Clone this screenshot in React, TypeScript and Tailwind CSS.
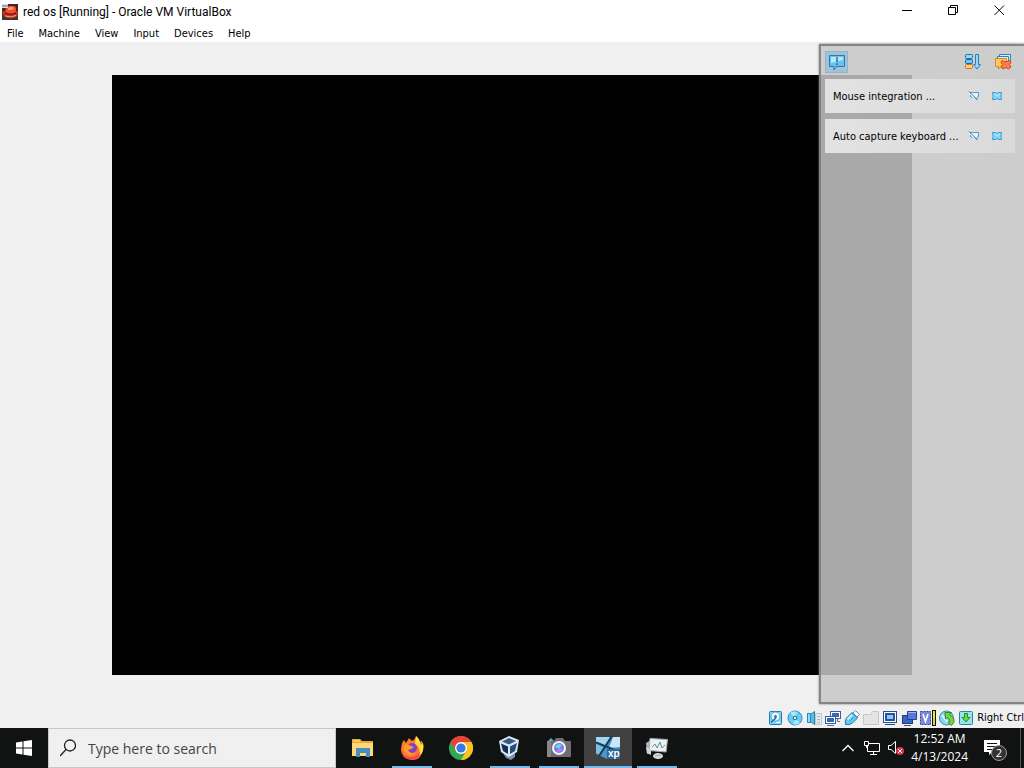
import { FC, ReactNode, useState } from "react";

const Svg: FC<{ size?: string; box?: string; children: ReactNode }> = ({
  size = "h-4 w-4",
  box = "0 0 16 16",
  children,
}) => (
  <svg viewBox={box} className={`${size} shrink-0`} fill="none" aria-hidden="true">
    {children}
  </svg>
);

const VmIcon = () => (
  <Svg>
    <rect width="16" height="16" fill="#4a2320" />
    <path d="M0 11H16V16H0Z" fill="#3d3632" />
    <path d="M0 8Q0 12 6 14Q14 15 16 11V8L13 6L2 7Z" fill="#c2301c" />
    <path d="M3 9L4 4Q7 1 11 2Q14 2 14 5V9Q9 12 3 9Z" fill="#ee5030" />
    <path d="M6 4Q9 2 12 4L10 6H6Z" fill="#ff9a72" />
    <path d="M3 8Q9 11 14 8V9.5Q9 12 3 9.5Z" fill="#6f140c" />
    <path d="M3 12Q9 14 14 11.5" stroke="#ff9c78" />
    <rect width="6" height="4" fill="#d9dee0" />
    <path d="M1 1V3M3 1V3M5 1V3" stroke="#6c7779" />
  </Svg>
);

const MENUS = ["File", "Machine", "View", "Input", "Devices", "Help"];

const TitleBar = () => (
  <header className="flex h-6 shrink-0 items-center bg-white px-0.5">
    <VmIcon />
    <h1 className="ml-[5px] grow font-[Roboto,sans-serif] text-[12px]">
      red os [Running] - Oracle VM VirtualBox
    </h1>
    <button aria-label="Minimize" className="flex h-6 w-[45px] items-start justify-center pt-[5px]">
      <Svg size="h-[11px] w-[11px]" box="0 0 11 11">
        <path d="M0 5.5H10" stroke="#000" />
      </Svg>
    </button>
    <button aria-label="Restore" className="flex h-6 w-[46px] items-start justify-center pt-[5px]">
      <Svg size="h-[11px] w-[11px]" box="0 0 11 11">
        <path d="M.5 2.5H7.5V9.5H.5ZM2.5 2.5V.5H9.5V7.5H7.5" stroke="#000" />
      </Svg>
    </button>
    <button aria-label="Close" className="flex h-6 w-[46px] items-start justify-center pt-[5px]">
      <Svg size="h-[11px] w-[11px]" box="0 0 11 11">
        <path d="M.5 .5L10 10M10 .5L.5 10" stroke="#000" />
      </Svg>
    </button>
  </header>
);

const MenuBar = () => (
  <nav className="flex h-[18px] shrink-0 items-center gap-[15px] bg-white px-[7px] pt-0.5">
    {MENUS.map((menu) => (
      <button key={menu}>{menu}</button>
    ))}
  </nav>
);

const PinIcon = () => (
  <Svg size="h-3 w-3" box="0 0 12 12">
    <path d="M2.5 2.5H10.5V6.5L9 7.5V10L6.5 7.5L2.5 7Z" fill="#e2f2fa" stroke="#5a9cc2" />
    <path d="M1 1.5L8.5 9" stroke="#3d7fa8" />
    <path d="M1 3L6.5 8.5" stroke="#fff" />
  </Svg>
);

const CrossIcon = () => (
  <Svg size="h-3 w-3" box="0 0 12 12">
    <path
      d="M1.5 2.5H4L6 3.5L8 2.5H10.5V4.5L9.5 6L10.5 7.5V9.5H8L6 8.5L4 9.5H1.5V7.5L2.5 6L1.5 4.5Z"
      fill="#84d3fa"
      stroke="#3d98cc"
    />
    <path d="M3 4L6 5.5L9 4" stroke="#c3ecff" />
  </Svg>
);

const NotificationCenter = () => {
  const [messages, setMessages] = useState([
    "Mouse integration ...",
    "Auto capture keyboard ...",
  ]);

  return (
    <aside className="absolute top-0.5 right-0 bottom-1 w-[205px] border-2 border-r-0 border-[#7d7d7d]/90 bg-[#c7c7c7]/85 shadow-[0_0_2px_#777]">
      <div className="flex h-[33px] items-center pr-3 pb-px pl-1">
        <button
          aria-label="Notifications"
          className="flex h-[22px] w-[23px] items-center justify-center border border-[#8fb5d0] bg-[#a4c2d6]"
        >
          <Svg size="h-[18px] w-[18px]" box="0 0 18 18">
            <path d="M1.5 2.5H16.5V13.5H8.5L6 17V13.5H1.5Z" fill="#62c4f5" stroke="#2d79a5" />
            <path d="M3 4H15V7L3 10Z" fill="#b5e8ff" />
            <path d="M9 4V9M9 10.5V12" stroke="#082b42" />
          </Svg>
        </button>
        <button aria-label="Sort notifications" className="ml-auto">
          <Svg>
            <rect x=".5" y=".5" width="7" height="4" rx="1" fill="#8bdcfb" stroke="#2571a0" />
            <rect x=".5" y="5.5" width="7" height="4" rx="1" fill="#68c9f4" stroke="#235f8c" />
            <rect x=".5" y="10.5" width="7" height="4" rx="1" fill="#ffd07c" stroke="#cc7125" />
            <path d="M10.5 .5H13.5V10.5H15.5L12 15L8.5 10.5H10.5Z" fill="#8edcfc" stroke="#2b7fb5" />
          </Svg>
        </button>
        <button aria-label="Remove all notifications" className="ml-[13px]">
          <Svg size="h-[18px] w-[18px]" box="0 0 18 18">
            <path d="M5.5 5V1.5H16.5V10" fill="#d7edf8" stroke="#347fb5" />
            <path d="M3.5 7V3.5H14.5V12" fill="#d7edf8" stroke="#347fb5" />
            <path d="M1.5 5.5H12.5V13.5H7L4.5 16V13.5H1.5Z" fill="#ffca5c" stroke="#d9832b" />
            <path
              d="M8 7.5L12 9L15.5 7.5L17 9.5L15.5 11.5L17 14L14.5 16L12 14.5L9 16L7 14L8.5 11.5L7 9.5Z"
              fill="#fc7d4b"
              stroke="#d44820"
            />
          </Svg>
        </button>
      </div>
      <ul className="flex flex-col gap-1.5 pr-[9px] pl-1">
        {messages.map((message) => (
          <li
            key={message}
            className="flex h-[34px] items-center bg-linear-to-r from-[#e2e2e2] to-[#dadada] pr-3 pl-2"
          >
            <span className="grow pt-0.5">{message}</span>
            <button aria-label="Do not show again">
              <PinIcon />
            </button>
            <button
              aria-label="Close message"
              className="ml-[11px]"
              onClick={() => setMessages(messages.filter((m) => m !== message))}
            >
              <CrossIcon />
            </button>
          </li>
        ))}
      </ul>
    </aside>
  );
};

const STATUS_ICONS: { name: string; icon: ReactNode }[] = [
  {
    name: "Hard disks",
    icon: (
      <>
        <rect x="1.5" y="1.5" width="12" height="13" rx="1" fill="#7ed6fa" stroke="#1b7dbb" />
        <circle cx="7.5" cy="6.5" r="4.5" fill="#eefaff" stroke="#5aa5cc" />
        <circle cx="7.5" cy="6.5" r="1.5" fill="#3a6fa0" />
        <path d="M3 12.5L8 8" stroke="#2a689c" strokeWidth="1.5" />
        <path d="M8 12.5H12" stroke="#fff" />
      </>
    ),
  },
  {
    name: "Optical drives",
    icon: (
      <>
        <circle cx="8" cy="8" r="7" fill="#65cdf6" stroke="#288bb8" />
        <path d="M8 8L3 3Q7 0 10 2ZM8 8L13 13Q9 16 6 14Z" fill="#a8e7fc" />
        <circle cx="8" cy="8" r="1.8" fill="#fff" stroke="#185c8a" />
      </>
    ),
  },
  {
    name: "Audio",
    icon: (
      <>
        <path d="M9.5 3.5H15.5V14.5H9.5Z" fill="#e6e9eb" stroke="#c4c9cc" />
        <path d="M11 6.5H14M11 9.5H14M11 12.5H14" stroke="#b7bdc1" />
        <path d="M1.5 3.5H4.5V12.5H1.5Z" fill="#8edffc" stroke="#2484b0" />
        <path d="M4.5 4.5L8.5 1.5V14.5L4.5 11.5Z" fill="#5ebfe8" stroke="#2484b0" />
      </>
    ),
  },
  {
    name: "Network",
    icon: (
      <>
        <rect x="5.5" y="1.5" width="10" height="7" fill="#fff" stroke="#3a5c9a" />
        <rect x="7" y="3" width="7" height="4" fill="#3b68b5" />
        <path d="M12.5 9V11.5H15" stroke="#686e75" />
        <rect x=".5" y="6.5" width="10" height="7" fill="#fff" stroke="#3a5c9a" />
        <rect x="2" y="8" width="7" height="4" fill="#3769b3" />
        <path d="M2 15.5H9" stroke="#686e75" />
      </>
    ),
  },
  {
    name: "USB devices",
    icon: (
      <>
        <path d="M9 3L11.5 .5L15.5 4.5L13 7Z" fill="#fff" stroke="#6d8ba0" />
        <path d="M2.5 8L8 2.5L13.5 8L8.5 13Q5 15.5 1.5 14.5Q.5 11 2.5 8Z" fill="#65c8f4" stroke="#217ba9" />
        <path d="M3.5 9.5L8 5" stroke="#c7f1ff" strokeWidth="2" />
        <path d="M6 11L9.5 7.5" stroke="#3a93c0" />
      </>
    ),
  },
  {
    name: "Shared folders",
    icon: <path d="M.5 4.5H8L9.5 1.5H15.5V14.5H.5Z" fill="#e4e4e4" stroke="#c6c6c6" />,
  },
  {
    name: "Display",
    icon: (
      <>
        <rect x="1.5" y="1.5" width="13" height="11" fill="#fff" stroke="#264e8c" />
        <rect x="4" y="4" width="8" height="6" fill="#8ec5f2" stroke="#2454a0" strokeWidth="2" />
        <path d="M3 14.5H13" stroke="#264e8c" />
      </>
    ),
  },
  {
    name: "Recording",
    icon: (
      <>
        <rect x="1.5" y="5.5" width="10" height="8" fill="#3866c3" stroke="#1c3e83" />
        <path d="M6.5 1.5H15.5V9.5H6.5Z" fill="#5878d2" stroke="#273ca0" />
        <path d="M7 2.5H15" stroke="#9fb4f0" />
        <path d="M3 15.5H10" stroke="#505a66" />
      </>
    ),
  },
  {
    name: "Processor",
    icon: (
      <>
        <rect x=".5" y="1.5" width="10" height="13" fill="#7c88dc" stroke="#3542a0" strokeDasharray="2 1" />
        <path d="M3 4L5.5 11.5L8 4" stroke="#fff" strokeWidth="1.6" />
        <rect x="12" y="0" width="4" height="16" fill="#111" />
        <path d="M14 1V15" stroke="#f3ea22" strokeWidth="2" />
        <path d="M14 8V15" stroke="#cde03a" strokeWidth="2" />
      </>
    ),
  },
  {
    name: "Mouse integration",
    icon: (
      <>
        <circle cx="7.5" cy="8" r="7" fill="#8ad4ee" stroke="#318eaf" />
        <path d="M3 5L8 12" stroke="#d9f5ff" strokeWidth="2" />
        <path d="M6 2.5H12.5L10.5 5Q15.5 7 15 12L12.5 15.5L9 12.5L11 11.5Q11 8.5 8 7.5L6.5 9Z" fill="#72d83c" stroke="#318a22" />
      </>
    ),
  },
  {
    name: "Keyboard capture",
    icon: (
      <>
        <rect x="1.5" y="1.5" width="13" height="13" rx="1" fill="#9ae2ee" stroke="#2586a5" />
        <path d="M6.5 3.5H9.5V7.5H12L8 12L4 7.5H6.5Z" fill="#6bdc46" stroke="#288d27" />
      </>
    ),
  },
];

const StatusBar = () => (
  <footer className="flex h-5 shrink-0 items-center justify-end gap-[3px]">
    {STATUS_ICONS.map(({ name, icon }) => (
      <button key={name} aria-label={name}>
        <Svg>{icon}</Svg>
      </button>
    ))}
    <span className="pt-px">Right Ctrl</span>
  </footer>
);

const APPS: { name: string; running?: boolean; active?: boolean; icon: ReactNode }[] = [
  {
    name: "File Explorer",
    icon: (
      <>
        <path d="M1 3H9L11 5H22V20H1Z" fill="#e5a93e" />
        <path d="M1 7H22V20H1Z" fill="#ffd777" />
        <path d="M2 5H9" stroke="#fff0a8" />
        <path d="M5 12H19V21H15V17H9V21H5Z" fill="#438fc2" />
      </>
    ),
  },
  {
    name: "Firefox",
    running: true,
    icon: (
      <>
        <path
          d="M2 7L4 4L6 7L9 2L12 5Q15 4 16 0Q19 3 19 6L22 5Q24 10 23 14Q21 24 12 24Q1 23 1 13Z"
          fill="#ff7b28"
        />
        <path d="M16 0Q21 4 20 9L23 7Q25 17 18 20Q22 12 15 8Z" fill="#ffdd3e" />
        <path d="M1 12Q3 22 12 21Q19 20 20 14Q21 23 12 24Q2 23 1 12Z" fill="#ff4055" />
        <circle cx="12" cy="12" r="5" fill="#8043c6" />
        <path d="M4 9Q7 7 11 10L14 11Q11 14 8 14Q10 18 15 17Q10 21 6 17Q3 14 4 9Z" fill="#ff9a2c" />
      </>
    ),
  },
  {
    name: "Google Chrome",
    icon: (
      <>
        <circle cx="12" cy="12" r="12" fill="#33a852" />
        <path d="M1.6 6A12 12 0 0 1 22.4 6L12 6L6.8 15Z" fill="#e94235" />
        <path d="M22.4 6A12 12 0 0 1 12 24L17.2 15L12 6Z" fill="#fcc31e" />
        <circle cx="12" cy="12" r="6" fill="#fff" />
        <circle cx="12" cy="12" r="4.6" fill="#347be8" />
      </>
    ),
  },
  {
    name: "VirtualBox",
    running: true,
    icon: (
      <>
        <path d="M5 17L8 22L13 24L17 21V15Z" fill="#7594b2" />
        <path d="M1 5L11 0L21 4L19 16L11 21L3 16Z" fill="#dce9f5" />
        <path d="M4 5.5L11 2L18 5L11 8.5Z" fill="#375c83" />
        <path d="M3 7.5L10 10.5V18L5 15Z" fill="#142d4d" />
        <path d="M19 7L12 10.5V18L17 15Z" fill="#294d78" />
      </>
    ),
  },
  {
    name: "Camera",
    running: true,
    icon: (
      <>
        <path d="M1 5L4 2L7 5Z" fill="#43b3c4" />
        <path d="M0 5H7L9 2H16L18 5H24V21H0Z" fill="#6f6b71" />
        <path d="M0 5H4V21H0Z" fill="#89868b" />
        <circle cx="12" cy="12" r="7" fill="#f3f4fb" />
        <circle cx="12" cy="12" r="5" fill="#6b7fe0" />
        <path d="M8 11Q11 6 15 9L12 13Z" fill="#70d1f2" />
        <path d="M9 15Q13 18 16 13L12 12Z" fill="#b984e6" />
      </>
    ),
  },
  {
    name: "red os",
    active: true,
    running: true,
    icon: (
      <>
        <path d="M0 1H24V23H11L0 18Z" fill="#4f94c4" />
        <path d="M0 1H14L10 10L0 6Z" fill="#a3d6ee" />
        <path d="M17 1H24V11L13 12Z" fill="#c6e8f6" />
        <path d="M0 8L9 12L4 19L0 17Z" fill="#7cc0e4" />
        <path d="M0 6.5L24 16M16 0L3 20" stroke="#163b60" strokeWidth="2" />
        <rect x="11" y="13" width="13" height="10" fill="#2d6699" />
        <text x="12" y="21" fontSize="10" fontWeight="700" fill="#fff" fontFamily="Liberation Sans">
          xp
        </text>
      </>
    ),
  },
  {
    name: "System Monitor",
    running: true,
    icon: (
      <>
        <path d="M1 7L6 4V17L2 18Z" fill="#aeb5b8" />
        <path d="M5 2.5L22.5 3.5L21 16L4 14.5Z" fill="#eff1f1" stroke="#a4abae" />
        <path d="M7 11L10 8L12 12L15 6L17 12L20 9" stroke="#5395a8" />
        <path d="M1 11L6 13V19L2 17Z" fill="#cfd4d6" />
        <ellipse cx="13" cy="20" rx="5" ry="3" fill="#d9dddd" />
        <path d="M10 20L16 19" stroke="#9aa1a1" />
      </>
    ),
  },
];

const Taskbar = () => {
  const [query, setQuery] = useState("");

  return (
    <div className="flex h-10 shrink-0 bg-[#111312] font-['Open_Sans',sans-serif] text-white">
      <button aria-label="Start" className="flex w-12 items-center justify-center">
        <Svg>
          <path d="M0 2.5L6.5 1.5V7.5H0ZM7.5 1.3L16 0V7.5H7.5ZM0 8.5H6.5V14.5L0 13.5ZM7.5 8.5H16V16L7.5 14.7Z" fill="#fff" />
        </Svg>
      </button>
      <label className="flex w-72 items-center gap-3 border border-[#c8c8c8] bg-[#f0f0f0] px-[11px] text-[#333]">
        <Svg size="h-[18px] w-[16px]" box="0 0 16 18">
          <circle cx="10" cy="6.5" r="5.5" stroke="#222" strokeWidth="1.3" />
          <path d="M6 10.5L0 17" stroke="#222" strokeWidth="1.3" />
        </Svg>
        <input
          type="text"
          aria-label="Search"
          placeholder="Type here to search"
          className="w-full bg-transparent text-[14px] outline-none placeholder:text-[#444]"
          value={query}
          onChange={(e) => setQuery(e.target.value)}
        />
      </label>
      <div className="ml-[3px] flex gap-px">
        {APPS.map((app) => (
          <button
            key={app.name}
            aria-label={app.name}
            className={`flex w-12 flex-col items-center ${app.active ? "bg-[#414141]" : ""}`}
          >
            <span className="flex h-[38px] items-center pt-0.5">
              <Svg size="h-6 w-6" box="0 0 24 24">
                {app.icon}
              </Svg>
            </span>
            {app.running && (
              <span className={`h-0.5 bg-[#76b9ed] ${app.active ? "w-full" : "w-10"}`} />
            )}
          </button>
        ))}
      </div>
      <div className="ml-auto flex items-center">
        <button aria-label="Show hidden icons">
          <Svg size="h-3 w-3" box="0 0 12 12">
            <path d="M.5 9L6 3.5L11.5 9" stroke="#fff" strokeWidth="1.3" />
          </Svg>
        </button>
        <button aria-label="Network" className="ml-2.5">
          <Svg>
            <path d="M5 3.5H15.5V11.5H3.5V6M9.5 12V14.5M6 14.5H13" stroke="#fff" />
            <path d="M.5 1.5H4.5V5.5H.5ZM2.5 6V8" stroke="#fff" />
          </Svg>
        </button>
        <button aria-label="Volume muted" className="ml-2">
          <Svg>
            <path d="M.5 5.5H3L7.5 1.5V13.5L3 9.5H.5Z" stroke="#fff" />
            <circle cx="12" cy="11" r="4" fill="#d7364a" />
            <path d="M10 9L14 13M14 9L10 13" stroke="#fff" />
          </Svg>
        </button>
        <time dateTime="2024-04-13T00:52" className="ml-[7px] flex flex-col text-center text-[12px] leading-[18px]">
          <span>12:52 AM</span>
          <span>4/13/2024</span>
        </time>
        <button aria-label="2 new notifications" className="relative mr-5 ml-4">
          <Svg>
            <path d="M0 0H16V12H8L5 15V12H0Z" fill="#fff" />
            <path d="M3 3.5H13M3 6.5H13M3 9.5H9" stroke="#111" />
          </Svg>
          <span className="absolute top-[5px] left-[7px] flex h-4 w-4 items-center justify-center rounded-full border border-[#999] bg-[#333] text-[11px]">
            2
          </span>
        </button>
        <button aria-label="Show desktop" className="mr-[3px] h-10 w-px bg-[#555]" />
      </div>
    </div>
  );
};

const App = () => (
  <div className="flex h-screen flex-col bg-[#f0f0f0] font-['DejaVu_Sans_Condensed','DejaVu_Sans',sans-serif] text-[11px] text-black">
    <TitleBar />
    <MenuBar />
    <main className="relative flex min-h-0 grow items-center justify-center">
      <div className="aspect-4/3 w-[800px] max-w-full bg-black" />
      <NotificationCenter />
    </main>
    <StatusBar />
    <Taskbar />
  </div>
);

export default App;
